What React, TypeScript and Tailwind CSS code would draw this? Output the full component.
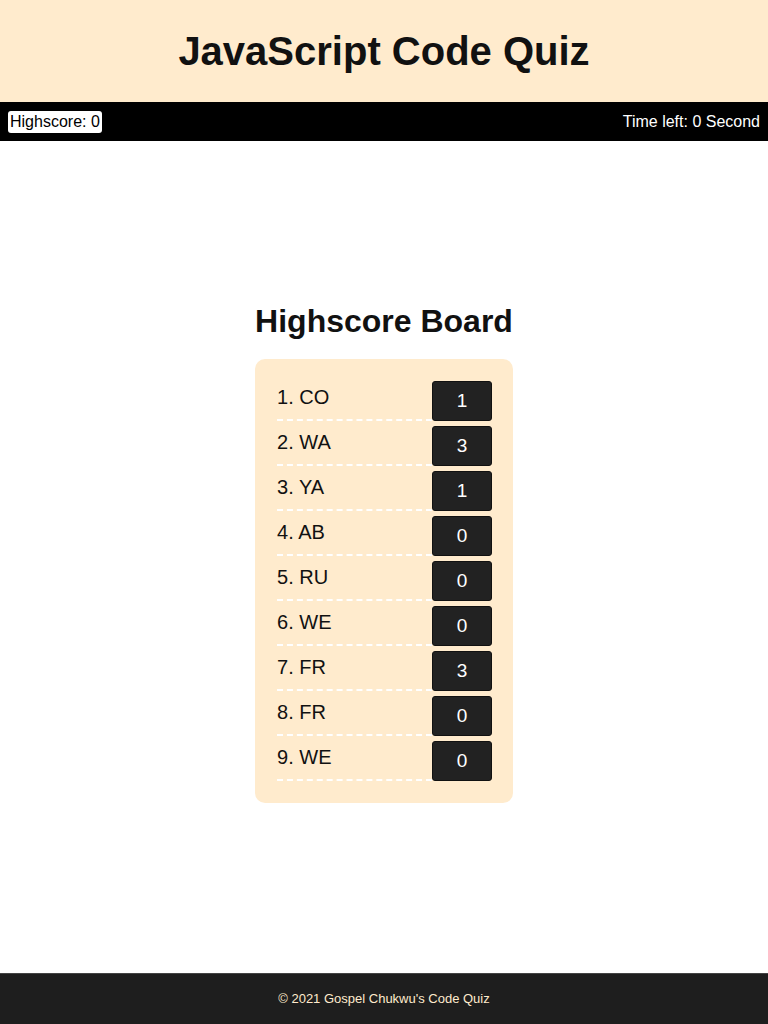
import React from "react";

const scores = [
  { name: "CO", score: 1 },
  { name: "WA", score: 3 },
  { name: "YA", score: 1 },
  { name: "AB", score: 0 },
  { name: "RU", score: 0 },
  { name: "WE", score: 0 },
  { name: "FR", score: 3 },
  { name: "FR", score: 0 },
  { name: "WE", score: 0 },
];

export default function App() {
  return (
    <div className="min-h-screen flex flex-col bg-white text-[#111] font-['Liberation_Sans',Arial,sans-serif]">
      {/* header */}
      <header className="h-[102px] bg-[#ffebcd] flex items-center justify-center">
        <h1 className="text-[40px] leading-none font-bold">JavaScript Code Quiz</h1>
      </header>

      {/* nav bar */}
      <nav className="h-[39px] bg-black flex items-center justify-between px-2">
        <span className="bg-white text-black text-[16px] leading-[22px] px-[2px] rounded-[3px]">Highscore: 0</span>
        <span className="text-white text-[16px]">Time left: 0 Second</span>
      </nav>

      {/* board */}
      <main className="flex-1 flex flex-col items-center pt-[162px]">
        <h2 className="text-[32px] leading-[37px] font-bold">Highscore Board</h2>
        <ol className="mt-[19px] w-[258px] bg-[#ffebcd] rounded-[10px] pl-[22px] pr-[21px] pt-[22px] pb-[17px] flex flex-col">
          {scores.map((s, i) => (
            <li key={i} className="flex justify-between mb-[5px]">
              <span className="w-[155px] h-[40px] pt-[5px] text-[20px] leading-[23px] border-b-2 border-dashed border-white">
                {i + 1}. {s.name}
              </span>
              <span className="w-[60px] h-[40px] bg-[#222] border border-[#111] rounded-[3px] text-white text-[19px] flex items-center justify-center">
                {s.score}
              </span>
            </li>
          ))}
        </ol>
      </main>

      {/* footer */}
      <footer className="h-[51px] bg-[#1e1e1e] border-t border-[#444] flex items-center justify-center">
        <p className="text-[13px] text-[#ffebcd]">© 2021 Gospel Chukwu's Code Quiz</p>
      </footer>
    </div>
  );
}
